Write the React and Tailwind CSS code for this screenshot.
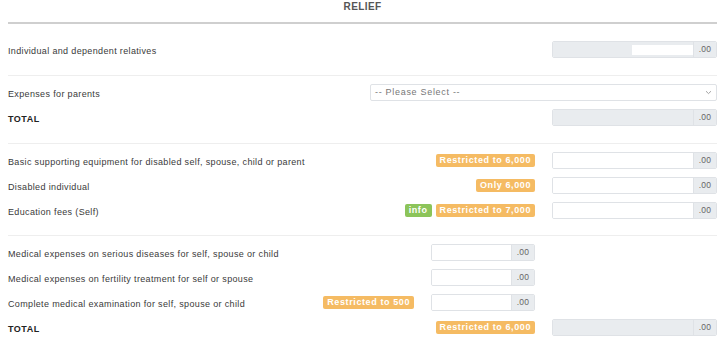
import React from 'react';

const font = { fontFamily: '"Liberation Sans", Arial, sans-serif' };

function Badge({ children, green }) {
  return (
    <span
      className={`shrink-0 inline-flex items-center h-[13px] px-[4px] rounded-[2px] text-[9px] font-bold text-white tracking-[0.6px] leading-none ${
        green ? 'bg-[#8cc45a]' : 'bg-[#f5bb63]'
      }`}
    >
      {children}
    </span>
  );
}

function Money({ disabled, partial, width = 'w-[165px]' }) {
  return (
    <div className={`${width} shrink-0 h-[17px] flex rounded-[2px] border border-[#dfe2e6] overflow-hidden`}>
      <div className={`flex-1 flex items-center justify-end ${disabled ? 'bg-[#e9ecef]' : 'bg-white'}`}>
        {partial && <div className="w-[61px] h-[10px] bg-white" />}
      </div>
      <div className="w-[23px] bg-[#e9ecef] border-l border-[#dfe2e6] flex items-center justify-center text-[8.5px] text-[#666] tracking-[0.3px]">
        .00
      </div>
    </div>
  );
}

function Row({ label, bold, mid, right }) {
  return (
    <div className="h-[17px] flex items-center">
      <div
        className={`flex-1 min-w-0 mt-[4px] text-[9px] whitespace-nowrap ${
          bold ? 'font-bold tracking-[0.5px] text-[#222]' : 'tracking-[0.35px] text-[#3a3a3a]'
        }`}
      >
        {label}
      </div>
      <div className="min-w-[165px] flex justify-end items-center gap-[4px]">{mid}</div>
      <div className="w-[17px] shrink-0" />
      <div className="w-[165px] shrink-0">{right}</div>
    </div>
  );
}

function Section({ first, last, tight, children }) {
  return (
    <div
      className={`flex flex-col gap-2 ${first ? 'pt-[17px]' : 'pt-2'} ${
        last ? '' : `${tight ? 'pb-[16px]' : 'pb-[17px]'} border-b border-[#eeeeee]`
      }`}
    >
      {children}
    </div>
  );
}

export default function App() {
  return (
    <div className="w-[728px] h-[350px] bg-white pl-2 pr-[11px] overflow-hidden" style={font}>
      <div className="h-[24px] pt-[1px] border-b-2 border-[#cfcfcf] flex justify-center">
        <span className="text-[10px] font-bold text-[#555] tracking-[0.4px] leading-[12px]">RELIEF</span>
      </div>

      <Section first>
        <Row label="Individual and dependent relatives" right={<Money disabled partial />} />
      </Section>

      <Section>
        <div className="h-[17px] flex items-center">
          <div className="flex-1 mt-[4px] text-[9px] text-[#3a3a3a] tracking-[0.35px]">Expenses for parents</div>
          <div className="w-[347px] h-[17px] rounded-[2px] border border-[#dfe2e6] bg-white flex items-center justify-between px-[4px] text-[9px] text-[#777] tracking-[0.7px]">
            <span>-- Please Select --</span>
            <svg width="7" height="5" viewBox="0 0 7 5" fill="none" stroke="#999" strokeWidth="0.9">
              <path d="M1 1.2 L3.5 3.6 L6 1.2" />
            </svg>
          </div>
        </div>
        <Row label="TOTAL" bold right={<Money disabled />} />
      </Section>

      <Section tight>
        <Row
          label="Basic supporting equipment for disabled self, spouse, child or parent"
          mid={<Badge>Restricted to 6,000</Badge>}
          right={<Money />}
        />
        <Row label="Disabled individual" mid={<Badge>Only 6,000</Badge>} right={<Money />} />
        <Row
          label="Education fees (Self)"
          mid={
            <>
              <Badge green>info</Badge>
              <Badge>Restricted to 7,000</Badge>
            </>
          }
          right={<Money />}
        />
      </Section>

      <Section last>
        <Row
          label="Medical expenses on serious diseases for self, spouse or child"
          mid={<Money width="w-[104px]" />}
        />
        <Row label="Medical expenses on fertility treatment for self or spouse" mid={<Money width="w-[104px]" />} />
        <Row
          label="Complete medical examination for self, spouse or child"
          mid={
            <div className="flex items-center gap-[17px]">
              <Badge>Restricted to 500</Badge>
              <Money width="w-[104px]" />
            </div>
          }
        />
        <Row label="TOTAL" bold mid={<Badge>Restricted to 6,000</Badge>} right={<Money disabled />} />
      </Section>
    </div>
  );
}
